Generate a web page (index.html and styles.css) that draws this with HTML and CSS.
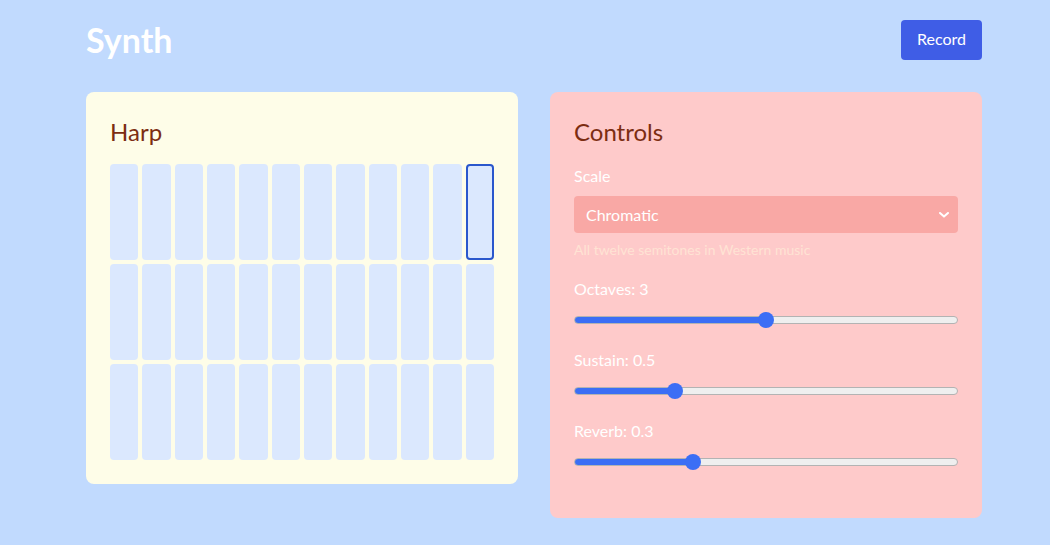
FILE: index.html
```html
<!DOCTYPE html>
<html lang="en">
<head>
<meta charset="utf-8">
<title>Synth</title>
<link rel="stylesheet" href="styles.css">
</head>
<body>
<div class="app">
  <header class="topbar">
    <h1 class="logo">Synth</h1>
    <button class="record-btn" type="button">Record</button>
  </header>
  <main class="panels">
    <section class="card harp">
      <h2 class="card-title">Harp</h2>
      <div class="strings">
        <div class="string"></div><div class="string"></div><div class="string"></div><div class="string"></div>
        <div class="string"></div><div class="string"></div><div class="string"></div><div class="string"></div>
        <div class="string"></div><div class="string"></div><div class="string"></div><div class="string active"></div>
        <div class="string"></div><div class="string"></div><div class="string"></div><div class="string"></div>
        <div class="string"></div><div class="string"></div><div class="string"></div><div class="string"></div>
        <div class="string"></div><div class="string"></div><div class="string"></div><div class="string"></div>
        <div class="string"></div><div class="string"></div><div class="string"></div><div class="string"></div>
        <div class="string"></div><div class="string"></div><div class="string"></div><div class="string"></div>
        <div class="string"></div><div class="string"></div><div class="string"></div><div class="string"></div>
      </div>
    </section>
    <section class="card controls">
      <h2 class="card-title">Controls</h2>
      <div class="field scale-field">
        <label class="field-label" for="scale">Scale</label>
        <div class="select-wrap">
          <select id="scale" class="select">
            <option>Chromatic</option>
            <option>Major</option>
            <option>Minor</option>
            <option>Pentatonic</option>
          </select>
          <svg class="chevron" width="10" height="6" viewBox="0 0 10 6" aria-hidden="true"><path d="M1 1 L5 4.6 L9 1" fill="none" stroke="#ffffff" stroke-width="2" stroke-linecap="round" stroke-linejoin="round"/></svg>
        </div>
        <p class="hint">All twelve semitones in Western music</p>
      </div>
      <div class="field">
        <label class="field-label" for="octaves">Octaves: 3</label>
        <input id="octaves" class="range" type="range" min="1" max="5" step="1" value="3" style="--fill: 50%">
      </div>
      <div class="field">
        <label class="field-label" for="sustain">Sustain: 0.5</label>
        <input id="sustain" class="range" type="range" min="0" max="2" step="0.1" value="0.5" style="--fill: 26%">
      </div>
      <div class="field">
        <label class="field-label" for="reverb">Reverb: 0.3</label>
        <input id="reverb" class="range" type="range" min="0" max="1" step="0.1" value="0.3" style="--fill: 30.7%">
      </div>
    </section>
  </main>
</div>
</body>
</html>
```
FILE: styles.css
```css
* {
  box-sizing: border-box;
}

html, body {
  margin: 0;
  padding: 0;
}

body {
  background: #c1dafe;
  font-family: "Lato", "Open Sans", "Noto Sans", sans-serif;
  color: #ffffff;
}

.app {
  width: 896px;
  margin-left: 86px;
  padding-top: 20px;
}

.topbar {
  display: flex;
  align-items: center;
  justify-content: space-between;
  height: 40px;
}

.logo {
  margin: 0;
  font-size: 34px;
  font-weight: 700;
  line-height: 40px;
  color: #ffffff;
}

.record-btn {
  width: 81px;
  height: 40px;
  border: none;
  border-radius: 4px;
  background: #3f5de6;
  color: #ffffff;
  font-family: inherit;
  font-size: 16px;
  line-height: 38px;
  padding: 0 0 2px;
  cursor: pointer;
}

.panels {
  display: grid;
  grid-template-columns: 432px 432px;
  column-gap: 32px;
  align-items: start;
  margin-top: 32px;
}

.card {
  border-radius: 8px;
  padding: 24px;
}

.harp {
  background: #fefde8;
}

.controls {
  background: #fecaca;
  padding-bottom: 24px;
}

.card-title {
  margin: 0 0 16px;
  font-size: 24px;
  font-weight: 400;
  line-height: 32px;
  color: #7c2d12;
}

.strings {
  display: grid;
  grid-template-columns: repeat(12, 1fr);
  grid-auto-rows: 96px;
  gap: 4px;
}

.string {
  background: #dbe8fe;
  border-radius: 4px;
}

.string.active {
  border: 2px solid #2a57cc;
}

.field {
  display: flex;
  flex-direction: column;
  margin-bottom: 20px;
}

.field:last-child {
  margin-bottom: 24px;
}

.scale-field {
  margin-bottom: 17px;
}

.field-label {
  font-size: 16px;
  line-height: 24px;
  color: #ffffff;
}

.select-wrap {
  position: relative;
  margin-top: 8px;
}

.select {
  -webkit-appearance: none;
  appearance: none;
  display: block;
  width: 100%;
  height: 37px;
  border: none;
  border-radius: 4px;
  background: #f9a8a5;
  color: #ffffff;
  font-family: inherit;
  font-size: 16px;
  padding: 0 32px 0 12px;
  outline: none;
}

.chevron {
  position: absolute;
  right: 9px;
  top: 16px;
}

.hint {
  margin: 7px 0 0;
  font-size: 14px;
  line-height: 20px;
  color: #ffe3d4;
}

.range {
  -webkit-appearance: none;
  appearance: none;
  display: block;
  width: 100%;
  height: 16px;
  margin: 11px 0 0;
  padding: 0;
  background: transparent;
  outline: none;
}

.range::-webkit-slider-runnable-track {
  height: 8px;
  border-radius: 4px;
  border: 1px solid #b3b3b3;
  background: linear-gradient(to right, #3b6ef5 0, #3b6ef5 var(--fill), #efefef var(--fill), #efefef 100%);
  background-clip: border-box;
}

.range::-webkit-slider-thumb {
  -webkit-appearance: none;
  appearance: none;
  width: 16px;
  height: 16px;
  margin-top: -5px;
  border-radius: 50%;
  border: none;
  background: #3b6ef5;
}
```
